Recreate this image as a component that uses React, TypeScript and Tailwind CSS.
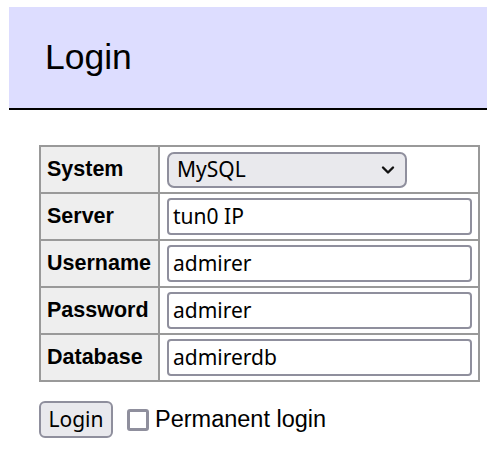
export default function App() {
  const rows = [
    { label: "Username", value: "admirer" },
    { label: "Password", value: "admirer" },
    { label: "Database", value: "admirerdb" },
  ];
  return (
    <div className="w-[487px] h-[451px] bg-white overflow-hidden" style={{ fontFamily: '"Liberation Sans", Arial, sans-serif' }}>
      <div className="pt-[7px] pl-[9px]">
        <h2 className="h-[103px] bg-[#ddf] border-b-2 border-black flex items-center pl-[36px] text-[35.5px] text-black font-normal leading-none">
          Login
        </h2>
      </div>
      <div className="pl-[39px] pt-[35px]">
        <table className="border-collapse border-2 border-[#999]">
          <tbody>
            <tr className="h-[47px]">
              <th className="w-[119px] bg-[#eee] border-2 border-[#999] text-left pl-[6px] text-[21.5px] font-bold">System</th>
              <td className="w-[320px] border-2 border-[#999] pl-[7px]">
                <div className="w-[240px] h-[36px] rounded-[7px] border-2 border-[#8f8f9d] bg-[#e9e9ed] flex items-center justify-between pl-[8px] pr-[10px] text-[21px]" style={{ fontFamily: '"Noto Sans", sans-serif' }}>
                  <span>MySQL</span>
                  <svg width="14" height="10" viewBox="0 0 14 10" fill="none" stroke="#111" strokeWidth="2.4" strokeLinecap="round" strokeLinejoin="round">
                    <path d="M2 2.5 L7 7.5 L12 2.5" />
                  </svg>
                </div>
              </td>
            </tr>
            {[{ label: "Server", value: "tun0 IP" }, ...rows].map((r) => (
              <tr key={r.label} className="h-[47px]">
                <th className="bg-[#eee] border-2 border-[#999] text-left pl-[6px] text-[21.5px] font-bold">{r.label}</th>
                <td className="border-2 border-[#999] pl-[7px]">
                  <div className="w-[305px] h-[37px] rounded-[4px] border-2 border-[#8f8f9d] bg-white flex items-center pl-[4px] text-[21px]" style={{ fontFamily: '"Noto Sans", sans-serif' }}>
                    {r.value}
                  </div>
                </td>
              </tr>
            ))}
          </tbody>
        </table>
        <div className="flex items-center mt-[19px]">
          <div className="w-[74px] h-[37px] rounded-[6px] border-2 border-[#8f8f9d] bg-[#e9e9ed] flex items-center justify-center text-[21px]" style={{ fontFamily: '"Noto Sans", sans-serif' }}>
            Login
          </div>
          <div className="ml-[14px] w-[22px] h-[22px] rounded-[3px] border-[3px] border-[#8f8f9d] bg-white" />
          <span className="ml-[6px] text-[23.5px]">Permanent login</span>
        </div>
      </div>
    </div>
  );
}
